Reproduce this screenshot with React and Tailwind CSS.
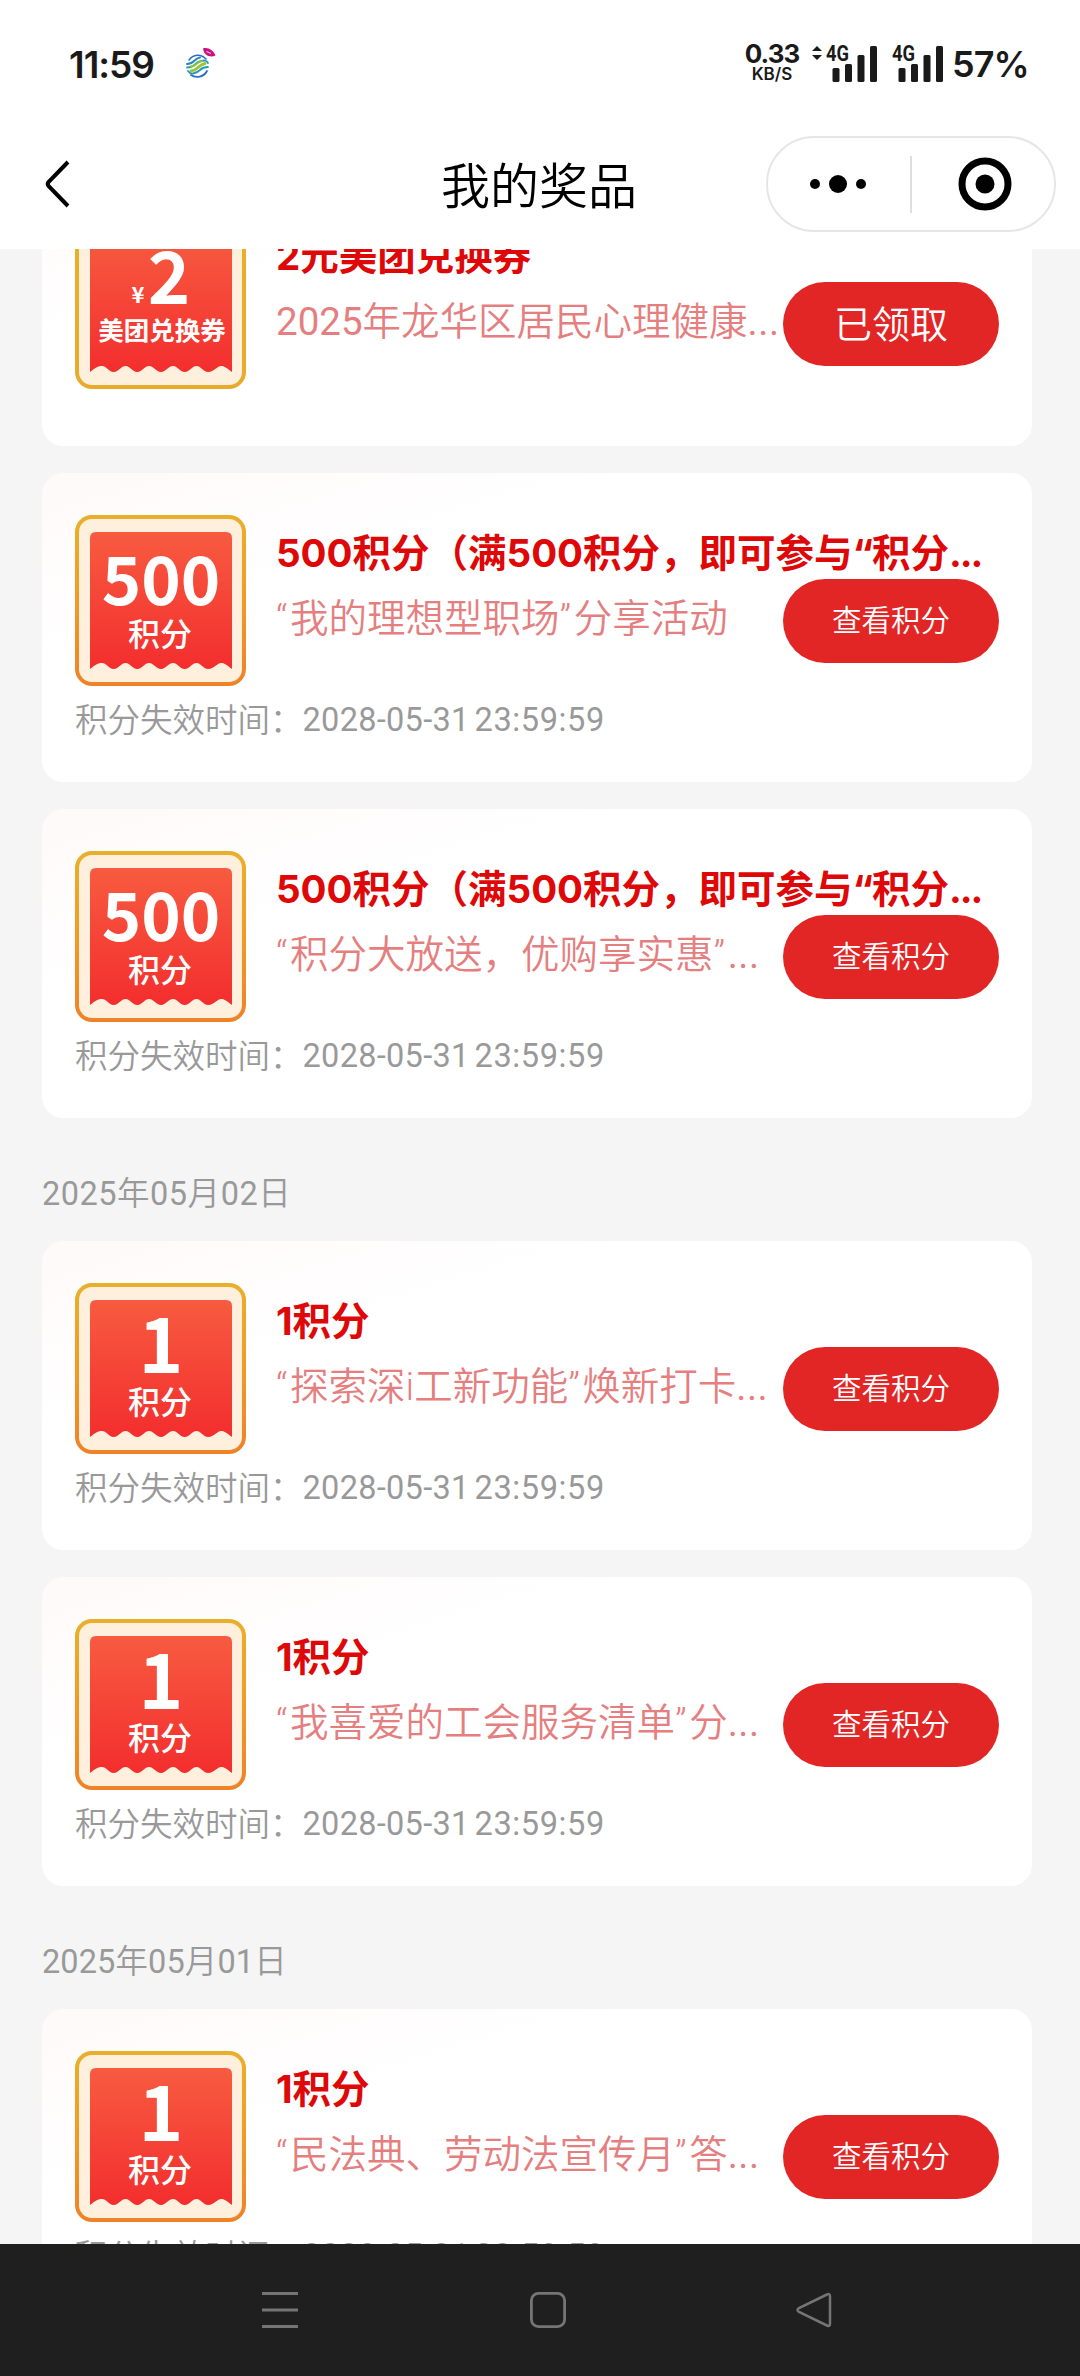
const LATIN = "font-['Roboto','Noto_Sans_CJK_SC',sans-serif]";

function CarrierLogo() {
  return (
    <svg width="30" height="32" viewBox="0 0 30 32" fill="none">
      <path d="M17 1.500C22 0 27 3 29.500 8.500C25 10.500 18 9.500 17 1.500Z" fill="#c9127f" />
      <path d="M20.500 4.500L25 6.500" stroke="#f3b5d8" strokeWidth="1.200" />
      <g strokeLinecap="round" strokeLinejoin="round">
        <path d="M3 13C7 7 15 6.500 20 12" stroke="#2a6fc4" strokeWidth="1.500" />
        <path d="M1 17Q5 17 8 14T14 10.500" stroke="#2a86c0" strokeWidth="2" />
        <path d="M1 20.500Q6 20.500 9.500 17T19 13.500Q21 14 22 16" stroke="#2a97b8" strokeWidth="1.800" />
        <path d="M5 24Q9 23.500 12 20.500T19 16.500" stroke="#9ac43a" strokeWidth="3" />
        <path d="M5 19.500Q8 19.500 10.500 17T16 14" stroke="#8dc63f" strokeWidth="1.800" />
        <path d="M2 24Q4 27 7 26.500Q11 26 14 23T22 20" stroke="#2a97b8" strokeWidth="1.800" />
        <path d="M5 28C10 31.500 18 30 21 24" stroke="#2a6fc4" strokeWidth="1.800" />
      </g>
    </svg>
  );
}

function Signal({ arrows }) {
  return (
    <svg width="68" height="38" viewBox="0 0 68 38" fill="#1a1a1a">
      {arrows && <path d="M2 7L7 2L12 7ZM2 11L7 16L12 11Z" />}
      <text x="16" y="17" fontFamily="Roboto, sans-serif" fontWeight="700" fontSize="22" textLength="23" lengthAdjust="spacingAndGlyphs">4G</text>
      <rect x="22.500" y="24" width="7" height="14" rx="1.500" />
      <rect x="35" y="20" width="7" height="18" rx="1.500" />
      <rect x="47.500" y="11" width="7" height="27" rx="1.500" />
      <rect x="60" y="2" width="7" height="36" rx="1.500" />
    </svg>
  );
}

function StatusBar() {
  return (
    <div className="flex h-[128px] items-center justify-between pl-[69px] pr-[53px] font-['Inter',sans-serif] font-bold text-[#1a1a1a]">
      <div className="flex items-center gap-[32px]">
        <span className="w-[85px] whitespace-nowrap text-[37px] font-semibold leading-none tracking-[-1px]">11:59</span>
        <div className="pb-[2px]"><CarrierLogo /></div>
      </div>
      <div className="flex items-center">
        <div className="mb-[4px] flex w-[56px] flex-col items-center">
          <span className="text-[26px] leading-[24px] tracking-[-1px]">0.33</span>
          <span className="text-[17px] font-semibold leading-[16px]">KB/S</span>
        </div>
        <div className="mb-[2px] ml-[10px] flex">
          <Signal arrows />
          <div className="ml-[-2px]"><Signal /></div>
        </div>
        <span className="ml-[8px] w-[75px] whitespace-nowrap text-[36px] font-semibold leading-none tracking-[-1px]">57%</span>
      </div>
    </div>
  );
}

function NavBar() {
  return (
    <div className="grid h-[121px] grid-cols-[290px_1fr_290px] items-center pb-[9px] pl-[22px] pr-[24px]">
      <svg className="ml-[22px]" width="28" height="50" viewBox="0 0 28 50" fill="none" stroke="#000" strokeWidth="4">
        <path d="M24 3L4.500 23Q3 25 4.500 27L24 47" />
      </svg>
      <h1 className="pb-[3px] text-center font-['Noto_Sans_CJK_SC',sans-serif] text-[49px] font-[350] leading-none">我的奖品</h1>
      <div className="flex h-[96px] w-[290px] items-center justify-self-end rounded-full border-2 border-[#e6e6e6]">
        <svg className="ml-[41px]" width="58" height="20" viewBox="0 0 58 20">
          <circle cx="6" cy="10" r="5" />
          <circle cx="29" cy="10" r="9" />
          <circle cx="52" cy="10" r="5" />
        </svg>
        <div className="ml-[43px] h-[57px] w-[2px] bg-[#dedede]" />
        <svg className="ml-[46px]" width="54" height="54" viewBox="0 0 54 54">
          <circle cx="27" cy="27" r="23" fill="none" stroke="#000" strokeWidth="7" />
          <circle cx="27" cy="27" r="9.500" />
        </svg>
      </div>
    </div>
  );
}

const WAVE =
  "M0 6Q0 0 6 0H136Q142 0 142 6V137C137 133.500 135 131 131 131S124 137 118.300 137S111.500 131 106.500 131S100 137 94.700 137S88 131 83 131S76 137 71 137S64 131 59 131S52.500 137 47.300 137S40.500 131 35.500 131S29 137 23.700 137S17 131 12 131S5 133.500 0 137Z";

function Badge({ kind }) {
  return (
    <div className={`h-[171px] w-[171px] shrink-0 rounded-[17px] bg-gradient-to-b p-[4px] ${kind === "coupon" ? "from-[#e8b02a] to-[#e8aa2a]" : "from-[#e8b02a] via-[#f29a26] to-[#ee8228]"}`}>
      <svg className="rounded-[13px] bg-[#fef0dd]" width="163" height="163" viewBox="4 4 163 163" fill="#fff" textAnchor="middle" fontFamily="'Noto Sans CJK SC', sans-serif" fontWeight="700">
        <defs>
          <linearGradient id="ticket" x1="0" y1="0" x2="0" y2="1">
            <stop offset="0" stopColor="#f75b40" />
            <stop offset="1" stopColor="#f32e2e" />
          </linearGradient>
        </defs>
        <path transform="translate(15 17)" d={WAVE} fill="url(#ticket)" />
        {kind === "coupon" ? (
          <>
            <text x="63" y="85" fontSize="22">¥</text>
            <text x="94" y="86" fontSize="72">2</text>
            <text x="87" y="122" fontSize="25.500">美团兑换券</text>
          </>
        ) : (
          <>
            <text x="86" y={kind === "1" ? 90 : 89.5} fontSize={kind === "1" ? 76 : 67}>{kind}</text>
            <text x="85" y="130.500" fontSize="32" fontWeight="500">积分</text>
          </>
        )}
      </svg>
    </div>
  );
}

// Curly quotes, digits and the trailing dots are set differently from the text around them.
function Spaced({ text, quote, dots, digits }) {
  return text.split(/([“”]|\.\.\.|\d+)/).map((part, i) => {
    if (part === "“" || part === "”") return <span key={i} className={quote}>{part}</span>;
    if (part === "...") return <span key={i} className={dots}>{part}</span>;
    if (/^\d+$/.test(part)) return <span key={i} className={digits}>{part}</span>;
    return part;
  });
}

function PrizeCard({ badge, title, desc, claimed }) {
  return (
    <div className={`shrink-0 rounded-[21px] bg-white bg-gradient-to-br from-[#fff9f9] to-white to-30% px-[33px] pt-[42px] ${claimed ? "h-[270px]" : "h-[309px]"}`}>
      <div className="flex gap-[30px]">
        <Badge kind={badge} />
        <div className="min-w-0 flex-1 pt-[10px]">
          <div className="h-[54px] whitespace-nowrap font-['Inter','Noto_Sans_CJK_SC',sans-serif] text-[38.5px] font-bold leading-[56px] text-[#de0808]">
            <Spaced text={title} quote="tracking-[-1.5px]" dots="tracking-[-2px]" />
          </div>
          <div className="flex">
            <div className={`h-[84px] w-[507px] shrink-0 whitespace-nowrap text-[38.5px] font-[350] leading-[79px] text-[#e57f7f] ${LATIN}`}>
              <Spaced text={desc} quote="tracking-[2.5px]" dots="font-normal tracking-[0.5px]" digits="font-normal" />
            </div>
            <button className={`h-[84px] w-[216px] shrink-0 rounded-full bg-[#e22626] pb-[5px] font-['Noto_Sans_CJK_SC',sans-serif] font-[350] text-white ${claimed ? "text-[38px]" : "text-[29.5px]"}`}>
              {claimed ? "已领取" : "查看积分"}
            </button>
          </div>
        </div>
      </div>
      {!claimed && (
        <div className={`mt-[12px] flex whitespace-nowrap text-[32.5px] font-[350] leading-[46px] text-[#999] ${LATIN}`}>
          <span>积分失效时间：</span>
          <span className="font-normal leading-[44px] tracking-[0.3px]">2028-05-31</span>
          <span className="ml-[5px] font-normal leading-[44px] tracking-[0.6px]">23:59:59</span>
        </div>
      )}
    </div>
  );
}

function DateHeading({ className, text }) {
  return (
    <div className={`mb-[-2px] mt-[25px] h-[46px] text-[32.5px] font-[350] leading-[48px] text-[#999] ${LATIN} ${className}`}>
      <Spaced text={text} digits="font-normal" />
    </div>
  );
}

function SystemNav() {
  return (
    <div className="flex h-[132px] items-center bg-[#1f1f1f] pl-[262px]">
      <svg width="36" height="36" viewBox="0 0 36 36" stroke="#757575" strokeWidth="3">
        <path d="M0 1.500H36M0 18H36M0 34.500H36" />
      </svg>
      <svg className="ml-[232px]" width="36" height="36" viewBox="0 0 36 36" fill="none" stroke="#757575" strokeWidth="2.800">
        <rect x="1.400" y="1.400" width="33.200" height="33.200" rx="7" />
      </svg>
      <svg className="ml-[230px]" width="36" height="36" viewBox="0 0 36 36" fill="none" stroke="#757575" strokeWidth="2.500">
        <path d="M31 2.500L3 16Q0 18 3 20L31 33.500Q34 35 34 31.500V4.500Q34 1 31 2.500Z" />
      </svg>
    </div>
  );
}

const POINTS_TITLE = "500积分（满500积分，即可参与“积分...";

export default function App() {
  return (
    <div className="flex h-[2376px] w-[1080px] flex-col overflow-hidden bg-white text-black">
      <StatusBar />
      <NavBar />
      <main className="h-[1995px] overflow-hidden bg-[#f5f5f5] pl-[42px] pr-[48px]">
        <div className="mt-[-73px] flex flex-col gap-[27px]">
          <PrizeCard badge="coupon" title="2元美团兑换券" desc="2025年龙华区居民心理健康..." claimed />
          <PrizeCard badge="500" title={POINTS_TITLE} desc="“我的理想型职场”分享活动" />
          <PrizeCard badge="500" title={POINTS_TITLE} desc="“积分大放送，优购享实惠”..." />
          <DateHeading className="tracking-[0.5px]" text="2025年05月02日" />
          <PrizeCard badge="1" title="1积分" desc="“探索深i工新功能”焕新打卡..." />
          <PrizeCard badge="1" title="1积分" desc="“我喜爱的工会服务清单”分..." />
          <DateHeading className="tracking-[0.1px]" text="2025年05月01日" />
          <PrizeCard badge="1" title="1积分" desc="“民法典、劳动法宣传月”答..." />
        </div>
      </main>
      <SystemNav />
    </div>
  );
}
